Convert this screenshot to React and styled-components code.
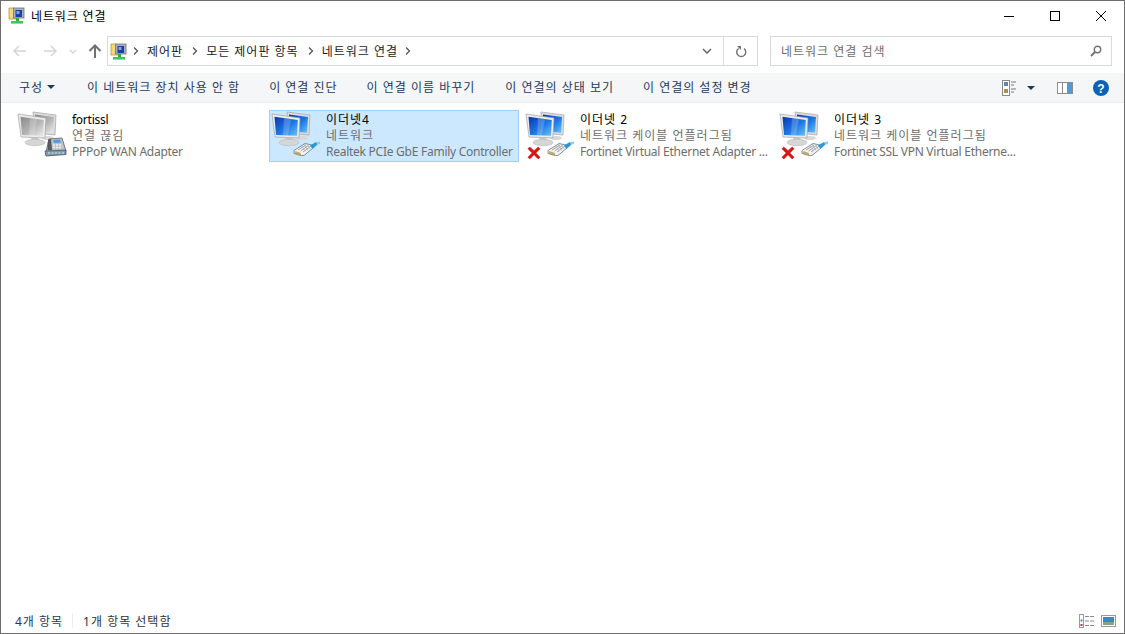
import React from "react";
import styled, { createGlobalStyle } from "styled-components";

const Global = createGlobalStyle`
  html, body { margin: 0; padding: 0; background: #fff; }
  body { font-family: "Noto Sans", "Noto Sans CJK KR", sans-serif; font-size: 12px; }
`;

const Win = styled.div`
  box-sizing: border-box;
  width: 1125px;
  height: 634px;
  border: 1px solid #6d6d6d;
  display: flex;
  flex-direction: column;
  overflow: hidden;
  background: #fff;
`;

const TitleBar = styled.div`
  height: 29px;
  display: flex;
  align-items: center;
  padding-left: 7px;
  flex: none;
`;
const TitleText = styled.span`
  margin-left: 6px;
  font-size: 12px;
  color: #000;
  letter-spacing: 0.85px;
`;
const WinButtons = styled.div`
  margin-left: auto;
  display: flex;
`;
const WinBtn = styled.div`
  width: 46px;
  height: 29px;
  display: flex;
  align-items: center;
  justify-content: center;
`;

const NavRow = styled.div`
  height: 43px;
  flex: none;
  display: flex;
  align-items: flex-start;
  padding-top: 6px;
  box-sizing: border-box;
`;
const NavBtns = styled.div`
  width: 106px;
  height: 30px;
  display: flex;
  align-items: center;
  flex: none;
`;
const NavBtn = styled.div`
  width: ${(p) => p.$w}px;
  display: flex;
  justify-content: center;
`;
const AddressBox = styled.div`
  box-sizing: border-box;
  width: 651px;
  height: 30px;
  border: 1px solid #d9d9d9;
  display: flex;
  align-items: center;
  padding-left: 2px;
`;
const Crumb = styled.span`
  color: #1a1a1a;
  font-size: 12px;
  letter-spacing: 1px;
  margin: 0 ${(p) => p.$mr ?? 9}px 0 8px;
`;
const Chevron = styled.span`
  display: flex;
  margin-left: ${(p) => p.$ml || 0}px;
`;
const AddressTools = styled.div`
  margin-left: auto;
  display: flex;
  height: 100%;
`;
const ToolBtn = styled.div`
  width: ${(p) => p.$w}px;
  display: flex;
  align-items: center;
  justify-content: center;
  border-left: ${(p) => (p.$line ? "1px solid #d9d9d9" : "none")};
`;
const SearchBox = styled.div`
  box-sizing: border-box;
  width: 342px;
  height: 30px;
  margin-left: 12px;
  border: 1px solid #d9d9d9;
  display: flex;
  align-items: center;
  justify-content: space-between;
  padding: 0 9px 0 10px;
  color: #6d6d6d;
  font-size: 12px;
  letter-spacing: 1px;
`;

const CommandBar = styled.div`
  height: 30px;
  box-sizing: border-box;
  padding-bottom: 2px;
  flex: none;
  background: #f5f6f7;
  border-bottom: 1px solid #eaebec;
  display: flex;
  align-items: center;
  color: #1e395b;
  font-size: 12px;
`;
const Command = styled.span`
  margin-left: ${(p) => p.$ml}px;
  display: flex;
  align-items: center;
  white-space: nowrap;
  letter-spacing: 1px;
`;
const CommandRight = styled.div`
  margin-left: auto;
  display: flex;
  align-items: center;
  padding-right: 15px;
  padding-top: 2px;
`;
const Caret = styled.span`
  display: inline-block;
  width: 0;
  height: 0;
  border-left: 4px solid transparent;
  border-right: 4px solid transparent;
  border-top: 4px solid #1e395b;
  margin-left: ${(p) => p.$ml}px;
`;
const RightIcon = styled.span`
  display: flex;
  margin-left: ${(p) => p.$ml || 0}px;
`;

const Content = styled.div`
  flex: 1;
  display: flex;
  align-items: flex-start;
  gap: 4px;
  padding: 7px 0 0 14px;
`;
const Tile = styled.div`
  box-sizing: border-box;
  width: 250px;
  height: 52px;
  display: flex;
  border: 1px solid ${(p) => (p.$selected ? "#99d1ff" : "transparent")};
  background: ${(p) => (p.$selected ? "#cce8ff" : "transparent")};
`;
const TileIcon = styled.div`
  width: 56px;
  flex: none;
  position: relative;
`;
const TileText = styled.div`
  min-width: 0;
  display: flex;
  flex-direction: column;
  padding-top: 1px;
`;
const Line = styled.div`
  height: 16.2px;
  line-height: 16.2px;
  font-size: 12px;
  white-space: nowrap;
  letter-spacing: ${(p) => (p.$latin ? "-0.26px" : "1px")};
  color: ${(p) => (p.$name ? "#000" : "#6d6d6d")};
`;

const StatusBar = styled.div`
  height: 25px;
  flex: none;
  display: flex;
  align-items: center;
  color: #1e395b;
  font-size: 12px;
  padding-left: 14px;
`;
const StatusText = styled.span`
  color: ${(p) => p.$color || "#1e395b"};
  white-space: nowrap;
  letter-spacing: 1px;
`;
const StatusSep = styled.span`
  width: 1px;
  height: 15px;
  background: #eeeeee;
  margin: 0 10px 0 9px;
`;
const StatusRight = styled.div`
  margin-left: auto;
  display: flex;
  align-items: center;
  gap: 6px;
  padding-right: 8px;
`;

function FolderNetIcon() {
  return (
    <svg width="17" height="17" viewBox="0 0 17 17">
      <path d="M1 1h5l1 1h3v10H1z" fill="#f2d77e" stroke="#b8993f" strokeWidth="0.8" />
      <rect x="5.5" y="1" width="10.5" height="10" fill="#a9b0bd" stroke="#6d7482" strokeWidth="0.8" />
      <rect x="7.5" y="3" width="6.5" height="7" fill="#1a3fa8" />
      <rect x="8.5" y="4" width="3" height="3" fill="#7fa5e6" />
      <rect x="8" y="11" width="3" height="3" fill="#27b33f" />
      <rect x="3" y="14" width="12" height="2" fill="#3cc85a" />
      <rect x="3" y="16" width="12" height="1" fill="#bdbdbd" />
    </svg>
  );
}

function Monitors({ id, live }) {
  const a = live ? "#0a35b0" : "#8a8a8a";
  const m = live ? "#1c78e6" : "#b4b4b4";
  const b = live ? "#6cc4f5" : "#ececec";
  return (
    <svg width="44" height="40" viewBox="0 0 44 40" style={{ position: "absolute", left: 0, top: 0 }}>
      <defs>
        <linearGradient id={id} x1="0" y1="0" x2="1" y2="1">
          <stop offset="0" stopColor={a} />
          <stop offset="0.55" stopColor={m} />
          <stop offset="1" stopColor={b} />
        </linearGradient>
      </defs>
      <path d="M17 1l23 3-1 20-20-2z" fill="#dcdcdc" stroke="#a3a3a3" strokeWidth="0.7" />
      <path d="M19 3.500l19 2.400-1 15.800-18-1.700z" fill={`url(#${id})`} />
      <ellipse cx="32" cy="27" rx="6" ry="2" fill="#d8d8d8" />
      <path d="M2 3l28 4-1 20-24-1z" fill="#ececec" stroke="#a0a0a0" strokeWidth="0.7" />
      <path d="M4.500 5.800l23.300 3.300-.8 15.700-21-.9z" fill={`url(#${id})`} />
      <path d="M14 7.200l7 1-3 16.200-5-.2z" fill="#fff" opacity="0.2" />
      <path d="M15 26.500h7l.5 2h-7z" fill="#c4c4c4" />
      <ellipse cx="19" cy="31.500" rx="10" ry="3.200" fill="#d6d6d6" stroke="#b9b9b9" strokeWidth="0.6" />
    </svg>
  );
}

function Phone() {
  return (
    <svg width="24" height="20" viewBox="0 0 24 20" style={{ position: "absolute", left: 28, top: 26 }}>
      <path d="M5 2l13-1 4 13-20 1z" fill="#bfc2c6" stroke="#5b5e62" strokeWidth="0.8" />
      <path d="M1 14l21-1v4.500L2 19z" fill="#7d9cb4" stroke="#4f5256" strokeWidth="0.8" />
      <path d="M9 3l7-0.500 1 3-7 .5z" fill="#4d9be0" />
      <path d="M4 2.500L7 2l1 11H3.500z" fill="#55585c" />
      <path d="M9 8h8M9 10.500h9" stroke="#f2f2f2" strokeWidth="1.300" strokeDasharray="2 1" />
      <path d="M4 16h16" stroke="#dce9f2" strokeWidth="1.100" strokeDasharray="2 1.500" />
    </svg>
  );
}

function Plug() {
  return (
    <svg width="28" height="17" viewBox="0 0 28 17" style={{ position: "absolute", left: 23, top: 30 }}>
      <path d="M1 9.500L12 2.500l7 1.500 1 3-9 7.500-2.500 0L1 12.500z" fill="#f1f3f5" stroke="#6c7278" strokeWidth="0.8" />
      <path d="M2.500 10.500l5 1.800v2l-5-1.800z" fill="#d8b24a" stroke="#7a7a60" strokeWidth="0.4" />
      <path d="M5 9l8-5M7.500 10l8-5.500M10 11l8-6" stroke="#8b9197" strokeWidth="0.8" />
      <path d="M8 3.500l4 7M11 2.800l4 7M14 3l3.500 5.500" stroke="#aab0b5" strokeWidth="0.7" />
      <path d="M17 4.500l6-3.500 1.500 2.500-5 4.500z" fill="#2a98d8" />
      <path d="M23 1l4-.5v2.500l-2.500.5z" fill="#86d0f4" />
    </svg>
  );
}

function RedX() {
  return (
    <svg width="14" height="14" viewBox="0 0 15 15" style={{ position: "absolute", left: 3, top: 35 }}>
      <path d="M1 3l2-2 4.500 4L12 1l2 2-4.500 4.500L14 12l-2 2-4.500-4.500L3 14l-2-2 4.500-4.500z" fill="#e31313" stroke="#a50d0d" strokeWidth="0.5" />
    </svg>
  );
}

function NetIcon({ id, kind, off }) {
  return (
    <>
      <Monitors id={id} live={kind !== "phone"} />
      {kind === "phone" ? <Phone /> : <Plug />}
      {off && <RedX />}
    </>
  );
}

function ChevronIcon() {
  return (
    <svg width="6" height="8" viewBox="0 0 6 8">
      <path d="M1 0.500L4.500 4 1 7.500" fill="none" stroke="#555" strokeWidth="1.300" />
    </svg>
  );
}

const tiles = [
  { id: "m1", kind: "phone", name: "fortissl", nameLatin: true, status: "연결 끊김", dev: "PPPoP WAN Adapter" },
  { id: "m2", kind: "plug", name: "이더넷4", status: "네트워크", dev: "Realtek PCIe GbE Family Controller", selected: true },
  { id: "m3", kind: "plug", off: true, name: "이더넷 2", status: "네트워크 케이블 언플러그됨", dev: "Fortinet Virtual Ethernet Adapter ..." },
  { id: "m4", kind: "plug", off: true, name: "이더넷 3", status: "네트워크 케이블 언플러그됨", dev: "Fortinet SSL VPN Virtual Etherne..." },
];

export default function App() {
  return (
    <Win>
      <Global />
      <TitleBar>
        <FolderNetIcon />
        <TitleText>네트워크 연결</TitleText>
        <WinButtons>
          <WinBtn>
            <svg width="10" height="10" viewBox="0 0 10 10"><path d="M0 5.500h10" stroke="#000" /></svg>
          </WinBtn>
          <WinBtn>
            <svg width="10" height="10" viewBox="0 0 10 10"><rect x="0.500" y="0.500" width="9" height="9" fill="none" stroke="#000" /></svg>
          </WinBtn>
          <WinBtn>
            <svg width="10" height="10" viewBox="0 0 10 10"><path d="M0 0l10 10M10 0L0 10" stroke="#000" strokeWidth="1" /></svg>
          </WinBtn>
        </WinButtons>
      </TitleBar>

      <NavRow>
        <NavBtns>
          <NavBtn $w={38}>
            <svg width="14" height="12" viewBox="0 0 14 12"><path d="M6 1L1 6l5 5M1 6h12" fill="none" stroke="#d4d4d4" strokeWidth="1.500" /></svg>
          </NavBtn>
          <NavBtn $w={21}>
            <svg width="14" height="12" viewBox="0 0 14 12"><path d="M8 1l5 5-5 5M13 6H1" fill="none" stroke="#d4d4d4" strokeWidth="1.500" /></svg>
          </NavBtn>
          <NavBtn $w={25}>
            <svg width="8" height="5" viewBox="0 0 8 5"><path d="M1 1l3 3 3-3" fill="none" stroke="#d0d0d0" strokeWidth="1.200" /></svg>
          </NavBtn>
          <NavBtn $w={19}>
            <svg width="14" height="14" viewBox="0 0 14 14"><path d="M1.500 7L7 1.500 12.500 7M7 2v12" fill="none" stroke="#707070" strokeWidth="2" /></svg>
          </NavBtn>
        </NavBtns>
        <AddressBox>
          <FolderNetIcon />
          <Chevron $ml={6}><ChevronIcon /></Chevron>
          <Crumb>제어판</Crumb>
          <ChevronIcon />
          <Crumb>모든 제어판 항목</Crumb>
          <ChevronIcon />
          <Crumb $mr={7}>네트워크 연결</Crumb>
          <ChevronIcon />
          <AddressTools>
            <ToolBtn $w={32}>
              <svg width="10" height="6" viewBox="0 0 10 6"><path d="M1 1l4 4 4-4" fill="none" stroke="#666" strokeWidth="1.500" /></svg>
            </ToolBtn>
            <ToolBtn $w={33} $line>
              <svg width="12" height="13" viewBox="0 0 12 13">
                <path d="M3.500 3.500A4.500 4.500 0 1 0 9 3.500" fill="none" stroke="#707070" strokeWidth="1.400" />
                <path d="M2 1h4v4z" fill="#707070" />
              </svg>
            </ToolBtn>
          </AddressTools>
        </AddressBox>
        <SearchBox>
          <span>네트워크 연결 검색</span>
          <svg width="12" height="12" viewBox="0 0 12 12">
            <circle cx="7.500" cy="4.500" r="3.200" fill="none" stroke="#707070" strokeWidth="1.400" />
            <path d="M5 7l-4 4" stroke="#707070" strokeWidth="1.800" />
          </svg>
        </SearchBox>
      </NavRow>

      <CommandBar>
        <Command $ml={18}>구성<Caret $ml={4} /></Command>
        <Command $ml={32}>이 네트워크 장치 사용 안 함</Command>
        <Command $ml={29}>이 연결 진단</Command>
        <Command $ml={29}>이 연결 이름 바꾸기</Command>
        <Command $ml={30}>이 연결의 상태 보기</Command>
        <Command $ml={29}>이 연결의 설정 변경</Command>
        <CommandRight>
          <svg width="16" height="16" viewBox="0 0 16 16">
            <rect x="0.500" y="0.500" width="7" height="15" fill="#fff" stroke="#8a8a8a" />
            <rect x="2" y="2" width="4" height="4" fill="#5f87b5" />
            <rect x="2" y="9" width="4" height="4" fill="#a8943f" />
            <path d="M9 2h5M9 5h3M9 9h5M9 12h3" stroke="#777" />
          </svg>
          <Caret $ml={9} />
          <RightIcon $ml={22}>
            <svg width="16" height="12" viewBox="0 0 16 12">
              <rect x="0.500" y="0.500" width="15" height="11" fill="#fff" stroke="#8a8a8a" />
              <path d="M5.500 1v10" stroke="#8a8a8a" />
              <rect x="10" y="1" width="5" height="10" fill="#4a9be0" />
            </svg>
          </RightIcon>
          <RightIcon $ml={20}>
            <svg width="16" height="16" viewBox="0 0 16 16">
              <circle cx="8" cy="8" r="8" fill="#0a62b8" />
              <text x="8" y="12.500" textAnchor="middle" fontSize="12" fontWeight="700" fill="#fff" fontFamily="Liberation Sans, sans-serif">?</text>
            </svg>
          </RightIcon>
        </CommandRight>
      </CommandBar>

      <Content>
        {tiles.map((t) => (
          <Tile key={t.id} $selected={t.selected}>
            <TileIcon><NetIcon id={t.id} kind={t.kind} off={t.off} /></TileIcon>
            <TileText>
              <Line $name $latin={t.nameLatin}>{t.name}</Line>
              <Line>{t.status}</Line>
              <Line $latin>{t.dev}</Line>
            </TileText>
          </Tile>
        ))}
      </Content>

      <StatusBar>
        <StatusText>4개 항목</StatusText>
        <StatusSep />
        <StatusText $color="#333">1개 항목 선택함</StatusText>
        <StatusRight>
          <svg width="16" height="14" viewBox="0 0 16 14">
            <rect x="0.500" y="0.500" width="4" height="13" fill="#fff" stroke="#9a9a9a" />
            <rect x="1.500" y="5.500" width="2" height="2" fill="#4a8ed0" />
            <rect x="1.500" y="10" width="2" height="2" fill="#c03030" />
            <path d="M6 2.500h4M11 2.500h4M6 7h4M11 7h4M6 11.500h4M11 11.500h4" stroke="#8a8a8a" />
          </svg>
          <svg width="15" height="12" viewBox="0 0 15 12">
            <rect x="0.500" y="0.500" width="14" height="11" fill="#fff" stroke="#9a9a9a" />
            <rect x="2" y="2" width="11" height="5" fill="#3f86c6" />
            <rect x="2" y="7" width="11" height="3" fill="#7da87a" />
          </svg>
        </StatusRight>
      </StatusBar>
    </Win>
  );
}
